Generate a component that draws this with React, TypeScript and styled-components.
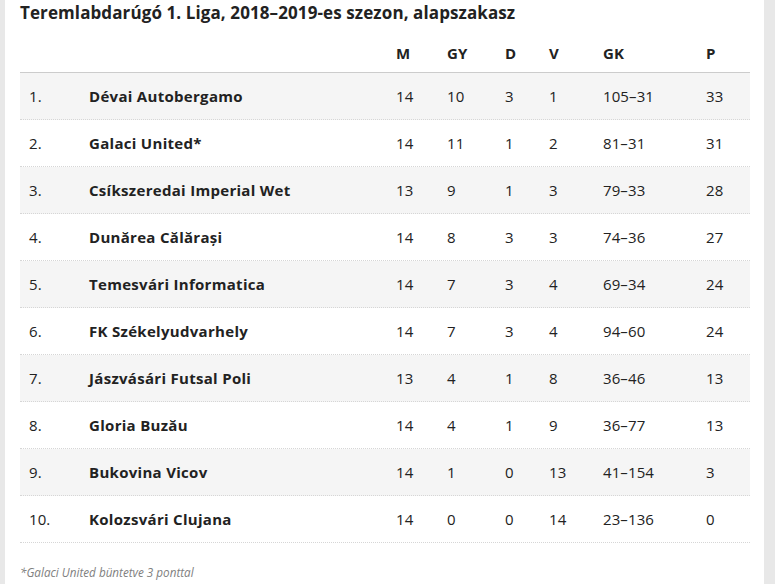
import React from "react";
import styled, { createGlobalStyle } from "styled-components";

const Global = createGlobalStyle`
  html, body { margin: 0; padding: 0; background: #ffffff; }
  body { font-family: "Open Sans", "Noto Sans", sans-serif; color: #222; }
`;

const Frame = styled.div`
  display: flex;
  width: 775px;
  height: 584px;
  overflow: hidden;
`;

const Strip = styled.div<{ $w: number }>`
  flex: 0 0 ${(p) => p.$w}px;
  background: #e8e8e8;
`;

const Content = styled.div`
  flex: 1;
  background: #fff;
  padding: 1px 14px 0 15px;
  display: flex;
  flex-direction: column;
`;

const Title = styled.h1`
  margin: 0;
  font-size: 17px;
  line-height: 24px;
  font-weight: 700;
  letter-spacing: 0.1px;
  color: #222;
`;

const cols = "60px 307px 51px 58px 44px 54px 103px 52px";

const HeaderRow = styled.div`
  display: grid;
  grid-template-columns: ${cols};
  height: 48px;
  align-items: end;
  border-bottom: 1px solid #cccccc;
  box-sizing: border-box;
  padding-bottom: 8px;
`;

const Row = styled.div<{ $odd: boolean }>`
  display: grid;
  grid-template-columns: ${cols};
  height: 47px;
  box-sizing: border-box;
  align-items: center;
  background: ${(p) => (p.$odd ? "#f5f5f5" : "#fff")};
  border-bottom: 1px dotted #d6d6d6;
`;

const Cell = styled.div<{ $bold?: boolean }>`
  padding-left: 9px;
  font-size: 15px;
  line-height: 22px;
  font-weight: ${(p) => (p.$bold ? 700 : 400)};
  letter-spacing: ${(p) => (p.$bold ? "0.3px" : "0.1px")};
  color: #222;
  white-space: nowrap;
`;

const HeadCell = styled(Cell)`
  font-weight: 700;
  letter-spacing: 0.1px;
`;

const Note = styled.p`
  margin: 21px 0 0 0;
  font-size: 11.7px;
  line-height: 16px;
  font-style: italic;
  color: #808080;
`;

const data: [string, string, number, number, number, number, string, number][] = [
  ["1.", "Dévai Autobergamo", 14, 10, 3, 1, "105–31", 33],
  ["2.", "Galaci United*", 14, 11, 1, 2, "81–31", 31],
  ["3.", "Csíkszeredai Imperial Wet", 13, 9, 1, 3, "79–33", 28],
  ["4.", "Dunărea Călărași", 14, 8, 3, 3, "74–36", 27],
  ["5.", "Temesvári Informatica", 14, 7, 3, 4, "69–34", 24],
  ["6.", "FK Székelyudvarhely", 14, 7, 3, 4, "94–60", 24],
  ["7.", "Jászvásári Futsal Poli", 13, 4, 1, 8, "36–46", 13],
  ["8.", "Gloria Buzău", 14, 4, 1, 9, "36–77", 13],
  ["9.", "Bukovina Vicov", 14, 1, 0, 13, "41–154", 3],
  ["10.", "Kolozsvári Clujana", 14, 0, 0, 14, "23–136", 0],
];

export default function App() {
  return (
    <>
      <Global />
      <Frame>
        <Strip $w={5} />
        <Content>
          <Title>Teremlabdarúgó 1. Liga, 2018–2019-es szezon, alapszakasz</Title>
          <HeaderRow>
            <HeadCell />
            <HeadCell />
            <HeadCell>M</HeadCell>
            <HeadCell>GY</HeadCell>
            <HeadCell>D</HeadCell>
            <HeadCell>V</HeadCell>
            <HeadCell>GK</HeadCell>
            <HeadCell>P</HeadCell>
          </HeaderRow>
          {data.map((r, i) => (
            <Row key={r[0]} $odd={i % 2 === 0}>
              <Cell>{r[0]}</Cell>
              <Cell $bold>{r[1]}</Cell>
              <Cell>{r[2]}</Cell>
              <Cell>{r[3]}</Cell>
              <Cell>{r[4]}</Cell>
              <Cell>{r[5]}</Cell>
              <Cell>{r[6]}</Cell>
              <Cell>{r[7]}</Cell>
            </Row>
          ))}
          <Note>*Galaci United büntetve 3 ponttal</Note>
        </Content>
        <Strip $w={11} />
      </Frame>
    </>
  );
}
